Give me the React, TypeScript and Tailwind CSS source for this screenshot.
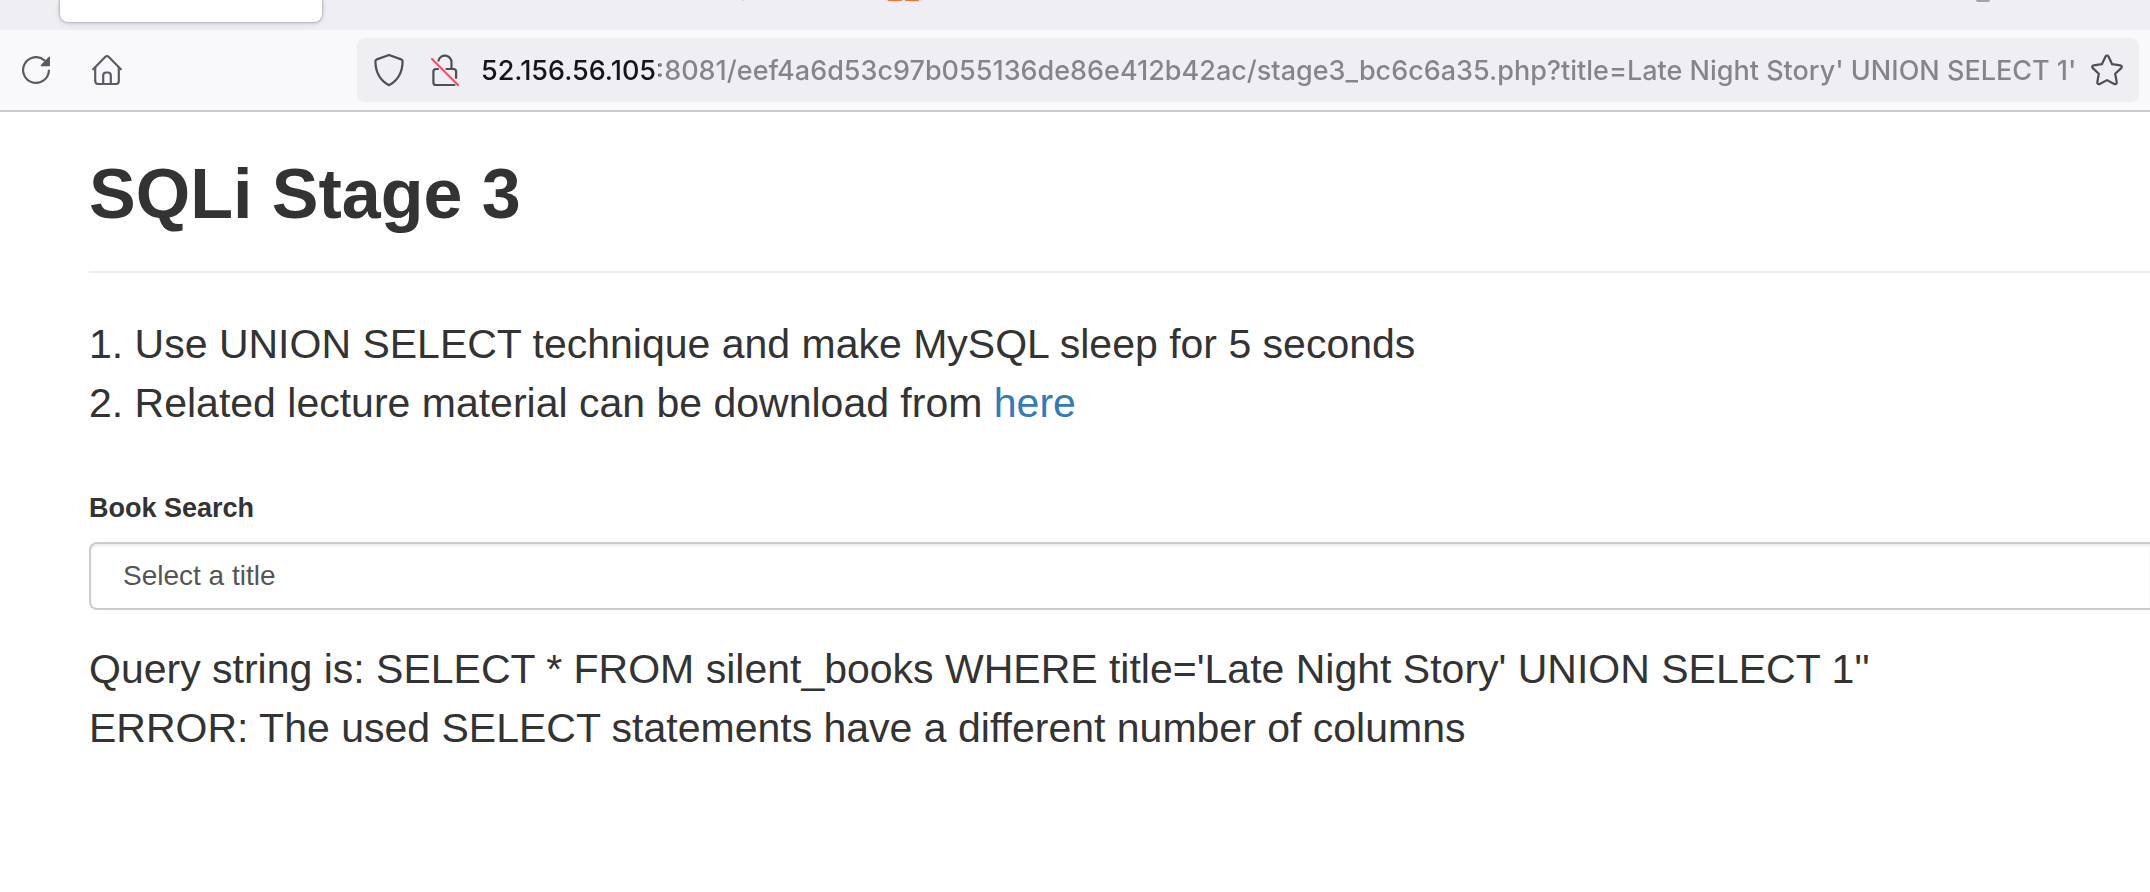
const URL_TEXT =
  "52.156.56.105:8081/eef4a6d53c97b055136de86e412b42ac/stage3_bc6c6a35.php?title=Late Night Story' UNION SELECT 1'";

function ReloadIcon() {
  return (
    <svg viewBox="0 0 28 28" className="size-7" fill="none" aria-hidden="true">
      <path d="M26.900 14.500A12.900 12.900 0 1 1 22.500 4.300" stroke="#5b5b66" strokeWidth="2.200" strokeLinecap="round" />
      <path d="M28 1.400v8.100a.8.8 0 0 1-.8.8h-7.700a.8.8 0 0 1-.6-1.400l7.700-8a.8.8 0 0 1 1.400.5z" fill="#5b5b66" />
    </svg>
  );
}

function HomeIcon() {
  return (
    <svg viewBox="0 0 30 30" className="size-[30px]" fill="none" stroke="#5b5b66" strokeWidth="2.200" strokeLinecap="round" strokeLinejoin="round" aria-hidden="true">
      <path d="M1.200 14.200 13.400 1.800a2.200 2.200 0 0 1 3.200 0L28.800 14.200" />
      <path d="M3.200 12.500V26a3 3 0 0 0 3 3h17.600a3 3 0 0 0 3-3V12.500" />
      <path d="M11.200 29V20.500a3 3 0 0 1 3-3h1.600a3 3 0 0 1 3 3V29" />
    </svg>
  );
}

function ShieldIcon() {
  return (
    <svg viewBox="0 0 30 34" className="h-[34px] w-[30px]" fill="none" aria-hidden="true">
      <path d="M15 2 27.200 6.400a2 2 0 0 1 1.400 2C28.400 19.500 24.600 27 15 32.200 5.400 27 1.600 19.500 1.400 8.400a2 2 0 0 1 1.400-2z" stroke="#4f4e55" strokeWidth="2.200" strokeLinejoin="round" />
    </svg>
  );
}

function InsecureLockIcon() {
  return (
    <svg viewBox="0 0 28 34" className="h-[34px] w-7" fill="none" strokeLinecap="round" aria-hidden="true">
      <path d="M7.500 7.600A6.600 6.600 0 0 1 20.500 9.500V16" stroke="#4f4e55" strokeWidth="2.200" />
      <path d="M7 16H5a2.600 2.600 0 0 0-2.600 2.600V29.400A2.600 2.600 0 0 0 5 32H23.500M15.500 16H22.500a2.600 2.600 0 0 1 2.600 2.600V25" stroke="#4f4e55" strokeWidth="2.200" />
      <path d="M1 6 27 32" stroke="#f0506e" strokeWidth="2.200" />
    </svg>
  );
}

function StarIcon() {
  return (
    <svg viewBox="0 0 32 32" className="size-8" fill="none" stroke="#4f4e55" strokeWidth="2.200" strokeLinejoin="round" aria-hidden="true">
      <path d="M14.500 2.500a1.700 1.700 0 0 1 3 0l3.600 7.700 8.200 1.100a1.600 1.600 0 0 1 .9 2.800l-6 5.700 1.500 8.400a1.700 1.700 0 0 1-2.500 1.800L16 26.100 8.800 30a1.700 1.700 0 0 1-2.500-1.800l1.500-8.400-6-5.700a1.600 1.600 0 0 1 .9-2.800l8.200-1.100z" />
    </svg>
  );
}

export default function App() {
  return (
    <div className="min-h-screen overflow-hidden bg-white">
      <header>
        <div className="relative h-[30px] overflow-hidden bg-[#efeef3]">
          <div className="ml-[60px] h-[22px] w-[262px] rounded-b-lg bg-white shadow-[0_0_2px_1px_rgba(128,128,142,0.5),0_2px_6px_rgba(128,128,142,0.2)]" />
          <span className="absolute top-0 left-[742px] h-px w-0.5 bg-[#d5d4da]" />
          <span className="absolute top-0 left-[888px] h-px w-3.5 bg-[#ff7139]" />
          <span className="absolute top-0 left-[905px] h-px w-3.5 bg-[#ff7139]" />
          <span className="absolute top-0 left-[1976px] h-0.5 w-3.5 rounded-b-full bg-[#a3a3a8]" />
        </div>
        <div className="flex items-center border-b-2 border-[#cbcbcf] bg-[#f9f9fb] py-2 pr-[11px] pl-1">
          <button type="button" aria-label="Reload" className="grid size-16 place-items-center">
            <ReloadIcon />
          </button>
          <button type="button" aria-label="Home" className="ml-[7px] grid size-16 place-items-center">
            <HomeIcon />
          </button>
          <div className="ml-[218px] flex h-16 min-w-0 flex-1 items-center rounded-lg bg-[#efeef3] pr-4 pl-[17px]">
            <button type="button" aria-label="Tracking protection">
              <ShieldIcon />
            </button>
            <button type="button" aria-label="Connection not secure" className="ml-[27px]">
              <InsecureLockIcon />
            </button>
            <input
              type="text"
              aria-label="Address"
              defaultValue={URL_TEXT}
              className="ml-[22px] min-w-0 flex-1 bg-[linear-gradient(90deg,#15141a_178px,#85848a_178px)] bg-clip-text pt-[3px] font-['Inter',sans-serif] text-[27px] font-medium text-transparent outline-none"
            />
            <button type="button" aria-label="Bookmark this page" className="ml-4">
              <StarIcon />
            </button>
          </div>
        </div>
      </header>

      <main className="pt-[42px] pl-[89px] font-['Liberation_Sans',Arial,sans-serif] text-[#333]">
        <h1 className="text-[70px] leading-[80px] font-bold">SQLi Stage 3</h1>
        <hr className="mt-[37px] border-t-2 border-[#eee]" />
        <p className="mt-[42px] text-[41px] leading-[59px]">
          1. Use UNION SELECT technique and make MySQL sleep for 5 seconds
          <br />
          2. Related lecture material can be download from{" "}
          <a href="#material" className="text-[#337ab7]">here</a>
        </p>
        <form className="mt-[55px]">
          <label htmlFor="book" className="block text-[27px] leading-10 font-bold">
            Book Search
          </label>
          <select
            id="book"
            className="mt-3.5 block h-[68px] w-full appearance-none rounded-l-lg border-2 border-r-0 border-[#ccc] bg-white px-8 text-[28px] text-[#555] shadow-[inset_0_2px_2px_rgba(0,0,0,0.075)]"
          >
            <option>Select a title</option>
          </select>
        </form>
        <p className="mt-[30px] text-[41px] leading-[59px]">
          Query string is: SELECT * FROM silent_books WHERE title='Late Night Story' UNION SELECT 1''
          <br />
          ERROR: The used SELECT statements have a different number of columns
        </p>
      </main>
    </div>
  );
}
